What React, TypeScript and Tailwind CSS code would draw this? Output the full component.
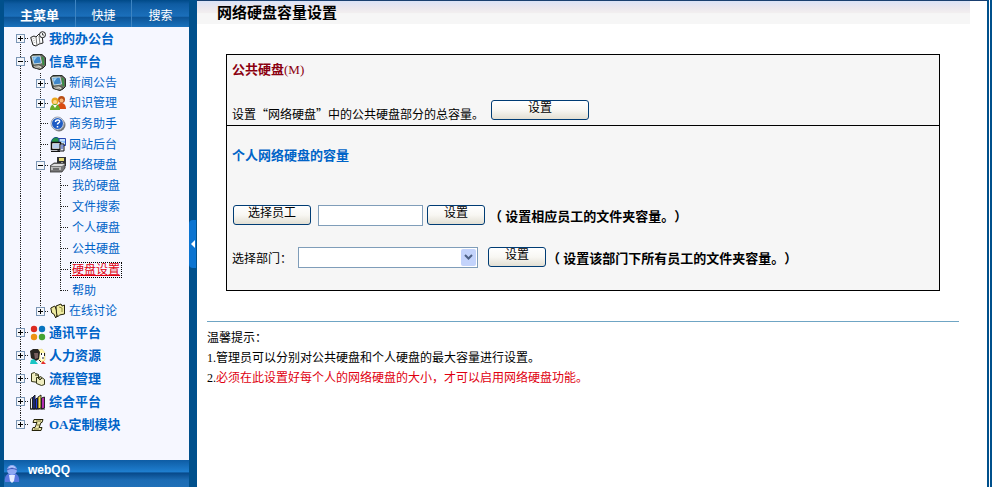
import React from 'react';

type Cell = 'line' | 'plus' | 'plusFirst' | 'plusLast' | 'minus' | 'tee' | 'end';
type IconName = 'desk' | 'computer' | 'people' | 'help' | 'site' | 'drive' | 'chat' | 'dots' | 'staff' | 'flow' | 'books' | 'scroll';

interface TreeRow {
    label: string;
    cells: Cell[];
    icon?: IconName;
    active?: boolean;
}

const rows: TreeRow[] = [
    { label: '我的办公台', cells: ['plusFirst'], icon: 'desk' },
    { label: '信息平台', cells: ['minus'], icon: 'computer' },
    { label: '新闻公告', cells: ['line', 'plus'], icon: 'computer' },
    { label: '知识管理', cells: ['line', 'plus'], icon: 'people' },
    { label: '商务助手', cells: ['line', 'tee'], icon: 'help' },
    { label: '网站后台', cells: ['line', 'tee'], icon: 'site' },
    { label: '网络硬盘', cells: ['line', 'minus'], icon: 'drive' },
    { label: '我的硬盘', cells: ['line', 'line', 'tee'] },
    { label: '文件搜索', cells: ['line', 'line', 'tee'] },
    { label: '个人硬盘', cells: ['line', 'line', 'tee'] },
    { label: '公共硬盘', cells: ['line', 'line', 'tee'] },
    { label: '硬盘设置', cells: ['line', 'line', 'tee'], active: true },
    { label: '帮助', cells: ['line', 'line', 'end'] },
    { label: '在线讨论', cells: ['line', 'plusLast'], icon: 'chat' },
    { label: '通讯平台', cells: ['plus'], icon: 'dots' },
    { label: '人力资源', cells: ['plus'], icon: 'staff' },
    { label: '流程管理', cells: ['plus'], icon: 'flow' },
    { label: '综合平台', cells: ['plus'], icon: 'books' },
    { label: 'OA定制模块', cells: ['plusLast'], icon: 'scroll' },
];

const Connector: React.FC<{ kind: Cell; height: number }> = ({ kind, height }) => {
    const mid = Math.floor(height / 2);
    const isBox = kind.startsWith('plus') || kind === 'minus';
    const stops = kind === 'end' || kind === 'plusLast';
    return (
        <svg width="20" height={height} className="shrink-0" shapeRendering="crispEdges" aria-hidden="true">
            <path d={`M10.5 ${kind === 'plusFirst' ? mid : 0}V${stops ? mid + 1 : height}`} stroke="#222" strokeDasharray="1 1" />
            {kind !== 'line' && <path d={`M11 ${mid}.5H19`} stroke="#222" strokeDasharray="1 1" />}
            {isBox && (
                <g>
                    <rect x="6.5" y={mid - 3.5} width="8" height="8" fill="#f4f6fa" stroke="#7b96b5" />
                    <path d={`M8 ${mid}.5H13`} stroke="#000" />
                    {kind !== 'minus' && <path d={`M10.5 ${mid - 2}V${mid + 3}`} stroke="#000" />}
                </g>
            )}
        </svg>
    );
};

const icons: Record<IconName, React.ReactNode> = {
    desk: (
        <g stroke="#222">
            <path d="M.7 6.5L4 5l2 1 3-3 3 1 1 8-4 1-3 2-3-1z" fill="#fff" />
            <path d="M6 6l1 9M9 5l1 8" fill="none" stroke="#777" />
            <path d="M2.500 8l2-1M3 10l2-1M3.500 12l2-1" stroke="#aaa" strokeWidth=".7" />
            <circle cx="12.5" cy="3.7" r="3" fill="#f5f5f5" />
            <path d="M12.5 2v2h1.500" fill="none" strokeWidth=".8" />
        </g>
    ),
    computer: (
        <g>
            <path d="M.6 2.500L3 .6h9l3.400 3v8L13 14l-3 1.500-7-2-1-3z" fill="#6d7264" stroke="#1c1f1a" />
            <path d="M2 2.500l8-.500 1.500 7L4 10z" fill="#3f87c9" stroke="#d5e2e6" strokeWidth=".9" />
            <path d="M3 3.500l4-.500-3 4z" fill="#9bd2f7" />
            <path d="M12.500 3l1 8" stroke="#2f9440" strokeWidth="1.500" />
            <path d="M3 11.500l6-.500 4 2-3 2-5-1z" fill="#dcdccd" stroke="#333" strokeWidth=".7" />
            <path d="M5 12.500l5 1" stroke="#777" strokeWidth=".7" />
        </g>
    ),
    people: (
        <g>
            <circle cx="11.5" cy="4.5" r="3.5" fill="#b84d17" />
            <path d="M7 14c0-8 9-8 9 0z" fill="#d94b12" />
            <circle cx="11.5" cy="5.5" r="2" fill="#f6b478" />
            <circle cx="5" cy="6" r="3.5" fill="#e9a51d" />
            <path d="M0 15c0-8 10-8 10 0z" fill="#69aa28" />
            <circle cx="5" cy="7" r="2" fill="#ffd78b" />
            <path d="M3 10l2 3 2-3" fill="#fff" />
        </g>
    ),
    help: (
        <g>
            <circle cx="9" cy="9" r="6.5" fill="#777" />
            <circle cx="7.5" cy="7.5" r="6.5" fill="#eee" stroke="#9aa2b2" />
            <circle cx="7.5" cy="7.5" r="5.5" fill="#1f5cc4" />
            <path d="M5.5 6c0-3 5-2.5 4 0-.5 1-2 1-2 2.500M7.5 10v1.500" fill="none" stroke="#fff" strokeWidth="1.5" />
        </g>
    ),
    site: (
        <g>
            <circle cx="6" cy="5" r="4.5" fill="#269447" stroke="#164b85" />
            <path d="M9 1.500h6.500v7H9z" fill="#8fc4fa" stroke="#2a46b0" />
            <path d="M10 3h5M10 5l5 2" stroke="#fff" />
            <path d="M1.500 5.500h9v7h-9z" fill="#fff" stroke="#111" strokeWidth="1.5" />
            <path d="M3 7h6v4H3z" fill="#b9cdeb" />
            <path d="M1 14.500h9" stroke="#111" />
            <path d="M10 7h4v7H8v-1h2z" fill="#dce3f2" stroke="#111" />
            <path d="M11 9h3M11 11h2" stroke="#2540ad" />
        </g>
    ),
    drive: (
        <g>
            <path d="M7 0h9v9H7z" fill="#333" />
            <path d="M9 1h5v3H9z" fill="#e8dc75" />
            <path d="M11 5h2v2h-2z" fill="#ddd" />
            <path d="M0 9l4-3h11v5l-3 4H0z" fill="#777" stroke="#333" strokeWidth=".8" />
            <path d="M1 9h11l3-2H4z" fill="#ddd" />
            <path d="M1 10h10v3H1z" fill="#bbb" />
            <path d="M3 12h6" stroke="#222" />
        </g>
    ),
    chat: (
        <g stroke="#26230b" fill="#eeeaa0">
            <path d="M.8 5l4-2 3 7-2 5-2-4-2-1z" />
            <path d="M6 3l5-2 1 2 2.500-1v9l-5 1-2 2-1-4z" />
            <path d="M9 4l3 1v4" fill="none" stroke="#8e893d" />
        </g>
    ),
    dots: (
        <g>
            <circle cx="4" cy="4" r="3.2" fill="#dc2b21" />
            <circle cx="12" cy="4" r="3.2" fill="#0874bf" />
            <circle cx="4" cy="12" r="3.2" fill="#ed9213" />
            <circle cx="12" cy="12" r="3.2" fill="#45a332" />
        </g>
    ),
    staff: (
        <g>
            <path d="M8 2l4-1 3 4v7l-3 3-4-4z" fill="#fff7a9" stroke="#e3cd60" strokeWidth=".5" />
            <path d="M10 5h4v6l-3 1z" fill="#fff" />
            <path d="M0 3l3-2h5l2 3-1 7-3 2-5-3z" fill="#292522" />
            <path d="M4 5h4v5l-3 1z" fill="#796060" />
            <path d="M0 16l1-4 3-1 4 5z" fill="#18c5c5" />
            <path d="M11 16l2-3 3 3z" fill="#e52b2b" />
            <path d="M11.500 5v2M14.500 5v3M12 10h2M9 12l2 2" stroke="#222" />
        </g>
    ),
    flow: (
        <g stroke="#333416" fill="#eeecc0">
            <path d="M1.500 2.500l3-1 1 1 3 1v8l-7-1z" />
            <path d="M6.500 6.500h3l1-1 4 3v5l-3 1-5-2z" />
            <path d="M5 4c4 0 5 2 5 4M8 7l2 2 2-2" fill="none" />
        </g>
    ),
    books: (
        <g stroke="#171717" strokeWidth=".9">
            <path d="M.5 5l2-2v12h-2z" fill="#eee" />
            <path d="M3 3l2-2v14H3z" fill="#1e35b6" />
            <path d="M5.500 5l2-1v11h-2z" fill="#263bdc" />
            <path d="M8 3l3-2v13l-3 1z" fill="#ffe34e" />
            <path d="M11.500 4l3-1v11l-3 1z" fill="#b430b3" />
            <path d="M0 15h15" />
        </g>
    ),
    scroll: (
        <g stroke="#252309" fill="#eee9ae">
            <path d="M4 2.500h9l-1 3h-1l-2 5h3l-1 3H2l1-3h2l2-5H3z" />
            <path d="M6 4h5M7 8h3M4 12h5" fill="none" stroke="#777031" />
        </g>
    ),
};

const TreeItem: React.FC<{ row: TreeRow }> = ({ row }) => {
    const depth = row.cells.length;
    const last = row.cells[depth - 1];
    const expandable = last.startsWith('plus') || last === 'minus';
    const height = depth === 1 ? 23 : expandable ? 20 : 21;
    return (
        <li className="flex items-center">
            {row.cells.map((kind, i) => <Connector key={i} kind={kind} height={height} />)}
            {row.icon && <svg viewBox="0 0 16 16" className="size-4 shrink-0" aria-hidden="true">{icons[row.icon]}</svg>}
            <a
                href="#"
                className={
                    row.active
                        ? 'ml-px px-px text-xs leading-[14px] text-[#e00010] underline outline-1 outline-dotted outline-black'
                        : depth === 1
                            ? 'ml-[3px] text-[13px] leading-4 font-bold text-[#0064c8]'
                            : row.icon
                                ? 'ml-[3px] text-xs leading-4 text-[#0064c8]'
                                : 'ml-[2px] text-xs leading-4 text-[#0064c8]'
                }
            >
                {row.label}
            </a>
        </li>
    );
};

const Sidebar: React.FC = () => (
    <aside className="flex w-[185px] shrink-0 flex-col bg-[#f6f7ff]">
        <nav className="flex h-[27px] items-center bg-[linear-gradient(#004a88_0%,#0f5ca2_15%,#1b6fbb_60%,#0d5496_64%,#1a72bd_100%)] text-xs text-white">
            <a href="#" className="flex h-full w-[72px] items-center justify-center border-r border-[#3d84c2] pt-1 text-[13px] font-bold">主菜单</a>
            <a href="#" className="flex h-full w-14 items-center justify-center border-r border-[#3d84c2] pt-1">快捷</a>
            <a href="#" className="flex h-full flex-1 items-center justify-center pt-1">搜索</a>
        </nav>
        <ul className="flex-1 pl-[6px]">
            {rows.map((row) => <TreeItem key={row.label} row={row} />)}
        </ul>
        <div className="flex h-[27px] items-center bg-[linear-gradient(#0e5ca4_0%,#1f7fd0_44%,#07498a_48%,#1c6cb4_75%,#2070b8_100%)] pb-2">
            <svg viewBox="0 0 16 20" className="mt-2 h-5 w-4 shrink-0" aria-hidden="true">
                <path d="M1 18c-1-7 3-9 7-9s8 2 7 9z" fill="#5a78e0" />
                <circle cx="8" cy="6" r="5" fill="#8fa9f3" />
                <path d="M3 6c3-2 7-2 10 0" stroke="#3f56b8" fill="none" />
                <path d="M5 11h6l-1 6-2 2-2-2z" fill="#e5ecff" />
                <path d="M5 4c2-2 4-2 6 0" stroke="#c9d7ff" fill="none" />
            </svg>
            <a href="#" className="ml-2 font-['Liberation_Sans',sans-serif] text-xs leading-4 font-bold text-white">webQQ</a>
        </div>
    </aside>
);

const XpButton: React.FC<{ className: string; children: React.ReactNode }> = ({ className, children }) => (
    <button
        type="button"
        className={`h-5 shrink-0 rounded-[3px] border border-[#003c74] bg-linear-to-b from-white via-[#f8f7f3] to-[#e2dfd3] pb-1 text-xs leading-[14px] text-black ${className}`}
    >
        {children}
    </button>
);

const App: React.FC = () => (
    <div className="flex min-h-screen bg-[#00508c] pl-1 font-['Liberation_Serif','Noto_Sans_CJK_SC',serif] text-xs text-black [text-spacing-trim:space-all]">
        <Sidebar />
        <div className="flex w-2 shrink-0 items-center">
            <button type="button" aria-label="收起菜单" className="mr-px flex h-12 w-full items-center justify-center rounded-l-sm bg-[#0b74d1]">
                <svg viewBox="0 0 4 8" className="h-2 w-1" aria-hidden="true"><path d="M4 0v8L0 4z" fill="#fff" /></svg>
            </button>
        </div>
        <main className="min-w-0 flex-1 border-t border-[#1a3f70] bg-white">
            <h1 className="mr-[17px] h-[23px] bg-[linear-gradient(#dbe2f6_0%,#ebe7ee_30%,#f1eeef_50%,#f6f6f6_55%)] pl-5 text-[15px] leading-6 font-bold">网络硬盘容量设置</h1>
            <div className="mt-[30px] mr-[47px] ml-[29px] border border-black bg-[#f6f6f6]">
                <section className="h-[71px] border-b border-black pl-[5px]">
                    <h2 className="pt-[7px] text-[13px] leading-4 font-bold text-[#8b0010]">公共硬盘<span className="font-normal">(M)</span></h2>
                    <div className="mt-5 flex items-center">
                        <p className="mr-2 w-[251px] pt-2 font-['Noto_Sans_CJK_SC',sans-serif] leading-4 whitespace-nowrap">设置“网络硬盘”中的公共硬盘部分的总容量。</p>
                        <XpButton className="w-[98px]">设置</XpButton>
                    </div>
                </section>
                <section className="pb-[22px] pl-[5px]">
                    <h2 className="pt-[22px] text-[13px] leading-4 font-bold text-[#0064c8]">个人网络硬盘的容量</h2>
                    <div className="mt-10 flex h-[22px] items-center">
                        <XpButton className="ml-px w-[78px]">选择员工</XpButton>
                        <input aria-label="员工" className="ml-[7px] h-[21px] w-[105px] border border-[#7f9db9] bg-white px-1" />
                        <XpButton className="ml-1 w-[58px]">设置</XpButton>
                        <p className="ml-1 pt-1 text-[13px] leading-4 font-bold">（ 设置相应员工的文件夹容量。）</p>
                    </div>
                    <div className="mt-5 flex h-[22px] items-center">
                        <label htmlFor="department" className="w-[66px] pt-1">选择部门：</label>
                        <div className="relative">
                            <select id="department" className="block h-[21px] w-[180px] appearance-none border border-[#7f9db9] bg-white" />
                            <span className="pointer-events-none absolute top-0.5 right-0.5 flex h-[17px] w-[15px] items-center justify-center rounded-xs bg-[#c3d3fb]">
                                <svg viewBox="0 0 9 6" className="h-1.5 w-[9px]" aria-hidden="true"><path d="M1 1l3.500 3.500L8 1" fill="none" stroke="#4d6185" strokeWidth="2" /></svg>
                            </span>
                        </div>
                        <XpButton className="ml-[10px] w-[58px]">设置</XpButton>
                        <p className="ml-px pt-1 text-[13px] leading-4 font-bold">（ 设置该部门下所有员工的文件夹容量。）</p>
                    </div>
                </section>
            </div>
            <section className="mt-[30px] mr-7 ml-[10px] border-t border-[#6fa5c4] pt-[6px] leading-5">
                <h2>温馨提示：</h2>
                <p>1.管理员可以分别对公共硬盘和个人硬盘的最大容量进行设置。</p>
                <p>2.<span className="text-[#e00010]">必须在此设置好每个人的网络硬盘的大小，才可以启用网络硬盘功能。</span></p>
            </section>
        </main>
        <div className="w-[5px] shrink-0 border-x-2 border-[#00508c] bg-white" />
    </div>
);

export default App;
